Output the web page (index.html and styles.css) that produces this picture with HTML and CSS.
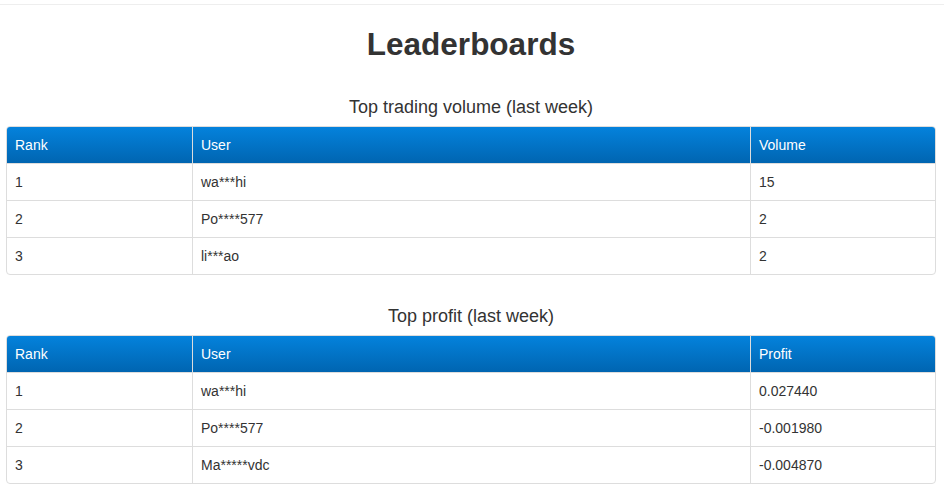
FILE: index.html
```html
<!DOCTYPE html>
<html lang="en">
<head>
    <meta charset="UTF-8">
    <meta name="viewport" content="width=device-width, initial-scale=1.0">
    <title>Leaderboards</title>
    <link rel="stylesheet" href="styles.css">
</head>
<body>
    <div class="topbar"></div>

    <div class="container">
        <h1>Leaderboards</h1>

        <h3>Top trading volume (last week)</h3>
        <div class="board">
            <table>
                <thead>
                    <tr>
                        <th class="col-rank">Rank</th>
                        <th class="col-user">User</th>
                        <th class="col-value">Volume</th>
                    </tr>
                </thead>
                <tbody>
                    <tr><td>1</td><td>wa***hi</td><td>15</td></tr>
                    <tr><td>2</td><td>Po****577</td><td>2</td></tr>
                    <tr><td>3</td><td>li***ao</td><td>2</td></tr>
                </tbody>
            </table>
        </div>

        <h3>Top profit (last week)</h3>
        <div class="board">
            <table>
                <thead>
                    <tr>
                        <th class="col-rank">Rank</th>
                        <th class="col-user">User</th>
                        <th class="col-value">Profit</th>
                    </tr>
                </thead>
                <tbody>
                    <tr><td>1</td><td>wa***hi</td><td>0.027440</td></tr>
                    <tr><td>2</td><td>Po****577</td><td>-0.001980</td></tr>
                    <tr><td>3</td><td>Ma*****vdc</td><td>-0.004870</td></tr>
                </tbody>
            </table>
        </div>
    </div>
</body>
</html>
```

FILE: styles.css
```css
* {
    margin: 0;
    padding: 0;
    box-sizing: border-box;
}

body {
    background-color: #ffffff;
    color: #333333;
    font-family: "Liberation Sans", Arial, sans-serif;
    font-size: 14px;
    line-height: 20px;
}

.topbar {
    height: 5px;
    border-bottom: 1px solid #eeeeee;
}

.container {
    width: 930px;
    margin-left: 6px;
}

h1 {
    text-align: center;
    font-size: 31.5px;
    line-height: 35px;
    font-weight: bold;
    margin-top: 22px;
    margin-bottom: 35px;
}

h3 {
    text-align: center;
    font-size: 18px;
    line-height: 20px;
    font-weight: normal;
    margin-bottom: 9px;
}

.board {
    border: 1px solid #dddddd;
    border-radius: 4px;
    overflow: hidden;
    margin-bottom: 31px;
}

.board:last-child {
    margin-bottom: 0;
}

table {
    width: 100%;
    border-collapse: separate;
    border-spacing: 0;
    table-layout: fixed;
}

th, td {
    text-align: left;
    padding: 8px;
    border-left: 1px solid #dddddd;
    height: 37px;
}

th:first-child, td:first-child {
    border-left: none;
}

td {
    border-top: 1px solid #dddddd;
}

th {
    height: 36px;
    font-weight: normal;
    color: #ffffff;
    background: linear-gradient(to bottom, #0482dc, #0065b1);
}

.col-rank {
    width: 185px;
}

.col-value {
    width: 185px;
}
```
